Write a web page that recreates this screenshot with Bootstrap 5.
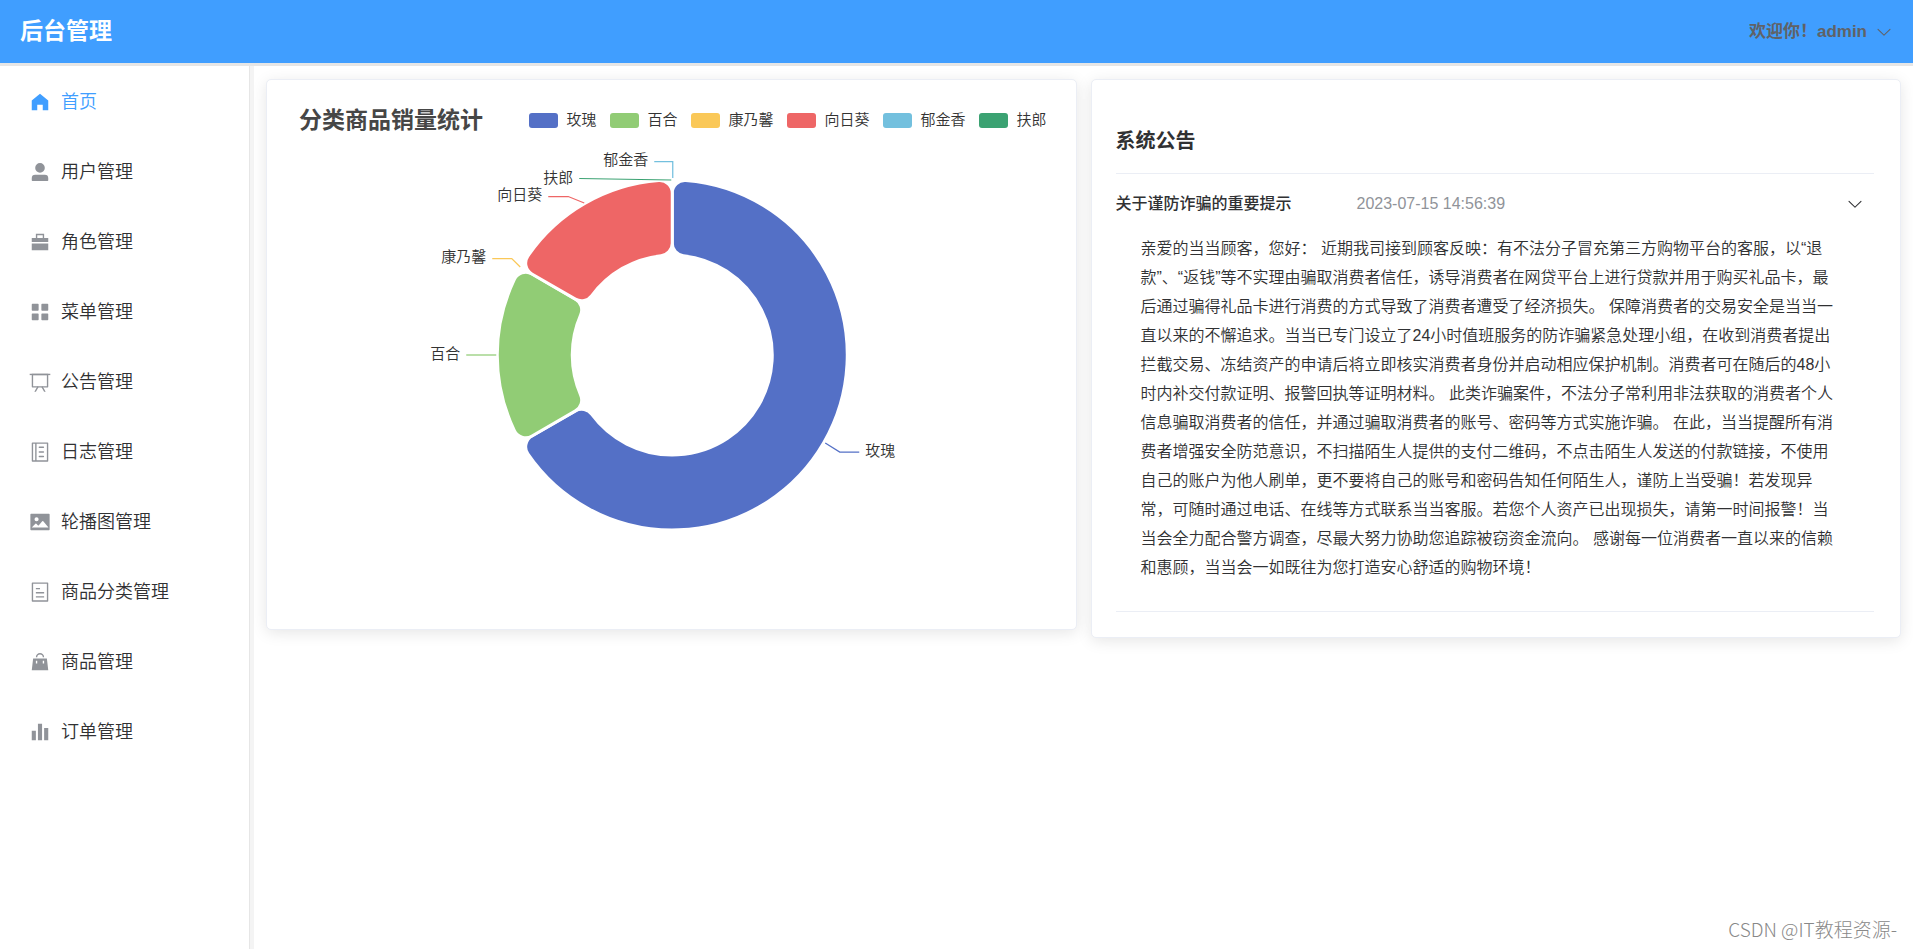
<!DOCTYPE html>
<html lang="zh-CN">
<head>
<meta charset="utf-8">
<meta name="viewport" content="width=device-width, initial-scale=1">
<title>后台管理</title>
<link href="https://cdn.jsdelivr.net/npm/bootstrap@5.3.0/dist/css/bootstrap.min.css" rel="stylesheet">
<style>
  body { font-family: "Liberation Sans", "Noto Sans CJK SC", sans-serif; font-weight: 350; color: #303133; background: #fff; }
  .topbar { height: 66px; background: #409eff; border-bottom: 3px solid #e6e6e6; padding: 0 20px; }
  .brand-title { font-size: 23px; font-weight: 700; color: #fff; text-decoration: none; }
  .user-toggle { font-size: 17px; font-weight: 700; color: #606266; border: 0; background: none; padding: 0; }
  .user-toggle svg, .notice-toggle svg { width: 18px; height: 18px; fill: currentColor; }
  .sidebar { width: 254px; border-right: 4px solid #f4f4f4; }
  .side-nav { border-right: 1px solid #e6e6e6; padding-top: 1px; }
  .side-link { height: 70px; padding: 0 29px; gap: 10px; font-size: 18px; color: #303133; text-decoration: none; white-space: nowrap; }
  .side-link svg { width: 22px; height: 22px; fill: #909399; flex: none; }
  .side-link.active { color: #409eff; }
  .side-link.active svg { fill: #409eff; }
  .panels { grid-template-columns: minmax(0, 1fr) minmax(0, 1fr); padding: 13px 12px; gap: 14px; }
  .panel { border: 1px solid #ebeef5; border-radius: 5px; box-shadow: 0 3px 15px rgba(0,0,0,.1); }
  .chart-head { padding: 23px 29px 0 32px; }
  .chart-title { font-size: 23px; line-height: 34px; font-weight: 700; color: #464646; margin: 0; }
  .legend-list { gap: 14px; font-size: 15px; color: #333; }
  .legend-list li { gap: 8px; }
  .swatch { width: 29px; height: 15px; border-radius: 3px; }
  .donut { display: block; width: 100%; height: 492px; font-size: 15px; }
  .notice { padding: 0 26px 25px 24px; }
  .notice-title { font-size: 20px; line-height: 30px; font-weight: 700; margin: 0; padding: 46px 0 17px; border-bottom: 1px solid #ebeef5; }
  .notice-toggle { height: 60px; border: 0; background: none; padding: 0 10px 0 0; font-size: 16px; color: #303133; }
  .notice-name { font-weight: 500; width: 241px; text-align: left; }
  .notice-date { color: #909399; font-weight: 400; }
  .notice-body { font-size: 16px; line-height: 29px; padding: 0 32px 29px 25px; border-bottom: 1px solid #ebeef5; }
  .watermark { right: 16px; bottom: 6px; font: 300 19px/28px "Noto Sans CJK SC", sans-serif; color: #888; }
</style>
</head>
<body class="d-flex flex-column min-vh-100">
<header class="topbar d-flex align-items-center justify-content-between">
  <a class="brand-title" href="#">后台管理</a>
  <div class="dropdown">
    <button class="user-toggle d-flex align-items-center gap-2" type="button" data-bs-toggle="dropdown" aria-expanded="false">
      <span>欢迎你！admin</span>
      <svg viewBox="0 0 1024 1024"><path d="M831.872 340.864 512 652.672 192.128 340.864a30.592 30.592 0 0 0-42.752 0 29.12 29.12 0 0 0 0 41.6L489.664 714.24a32 32 0 0 0 44.672 0l340.288-331.712a29.12 29.12 0 0 0 0-41.728 30.592 30.592 0 0 0-42.752 0z"/></svg>
    </button>
  </div>
</header>

<div class="d-flex flex-grow-1 position-relative">
  <aside class="sidebar flex-shrink-0 d-flex">
    <nav class="side-nav w-100 d-flex flex-column">
      <a class="side-link active d-flex align-items-center" href="#"><svg viewBox="0 0 1024 1024"><path d="M512 128 128 447.936V896h255.936V640H640v256h255.936V447.936z"/></svg>首页</a>
      <a class="side-link d-flex align-items-center" href="#"><svg viewBox="0 0 1024 1024"><path d="M288 320a224 224 0 1 0 448 0 224 224 0 1 0-448 0zm544 608H160a32 32 0 0 1-32-32v-96a160 160 0 0 1 160-160h448a160 160 0 0 1 160 160v96a32 32 0 0 1-32 32z"/></svg>用户管理</a>
      <a class="side-link d-flex align-items-center" href="#"><svg viewBox="0 0 1024 1024"><path d="M320 320V128h384v192h192v192H128V320h192zM128 576h768v320H128V576zm256-256h256.064V192H384v128z"/></svg>角色管理</a>
      <a class="side-link d-flex align-items-center" href="#"><svg viewBox="0 0 1024 1024"><path d="M160 448a32 32 0 0 1-32-32V160a32 32 0 0 1 32-32h256a32 32 0 0 1 32 32v256a32 32 0 0 1-32 32H160zm448 0a32 32 0 0 1-32-32V160a32 32 0 0 1 32-32h256a32 32 0 0 1 32 32v256a32 32 0 0 1-32 32H608zM160 896a32 32 0 0 1-32-32V608a32 32 0 0 1 32-32h256a32 32 0 0 1 32 32v256a32 32 0 0 1-32 32H160zm448 0a32 32 0 0 1-32-32V608a32 32 0 0 1 32-32h256a32 32 0 0 1 32 32v256a32 32 0 0 1-32 32H608z"/></svg>菜单管理</a>
      <a class="side-link d-flex align-items-center" href="#"><svg viewBox="0 0 1024 1024"><path d="M32 128h960v64H32z"/><path d="M192 192v512h640V192H192zm-64-64h768v608a32 32 0 0 1-32 32H160a32 32 0 0 1-32-32V128z"/><path d="M322.176 960H248.32l144.64-250.56 55.424 32L322.176 960zm453.888 0h-73.856L576 741.44l55.424-32L776.064 960z"/></svg>公告管理</a>
      <a class="side-link d-flex align-items-center" href="#"><svg viewBox="0 0 1024 1024"><path fill-rule="evenodd" d="M160 64h704a32 32 0 0 1 32 32v832a32 32 0 0 1-32 32H160a32 32 0 0 1-32-32V96a32 32 0 0 1 32-32zM192 128v768h96V128zM352 128v768h480V128z"/><path d="M480 256h192a32 32 0 0 1 0 64H480a32 32 0 0 1 0-64zM480 480h192a32 32 0 0 1 0 64H480a32 32 0 0 1 0-64zM480 688h192a32 32 0 0 1 0 64H480a32 32 0 0 1 0-64z"/></svg>日志管理</a>
      <a class="side-link d-flex align-items-center" href="#"><svg viewBox="0 0 1024 1024"><path d="M96 896a32 32 0 0 1-32-32V160a32 32 0 0 1 32-32h832a32 32 0 0 1 32 32v704a32 32 0 0 1-32 32H96zm315.52-228.48-68.928-68.928a32 32 0 0 0-45.248 0L128 768.064h778.688l-242.112-290.56a32 32 0 0 0-49.216 0L458.752 665.408a32 32 0 0 1-47.232 2.112zM256 384a96 96 0 1 0 192.064-.064A96 96 0 0 0 256 384z"/></svg>轮播图管理</a>
      <a class="side-link d-flex align-items-center" href="#"><svg viewBox="0 0 1024 1024"><path d="M192 128v768h640V128H192zm-32-64h704a32 32 0 0 1 32 32v832a32 32 0 0 1-32 32H160a32 32 0 0 1-32-32V96a32 32 0 0 1 32-32zm160 448h384v64H320v-64zm0-192h192v64H320v-64zm0 384h384v64H320v-64z"/></svg>商品分类管理</a>
      <a class="side-link d-flex align-items-center" href="#"><svg viewBox="0 0 1024 1024"><path d="M192 352h640l64 544H128l64-544zm128 224h64V448h-64v128zm320 0h64V448h-64v128zM384 288h-64a192 192 0 1 1 384 0h-64a128 128 0 1 0-256 0z"/></svg>商品管理</a>
      <a class="side-link d-flex align-items-center" href="#"><svg viewBox="0 0 1024 1024"><path d="M416 896V128h192v768H416zm-288 0V448h192v448H128zm576 0V320h192v576H704z"/></svg>订单管理</a>
    </nav>
  </aside>

  <main class="panels flex-grow-1 d-grid align-items-start">
    <section class="panel bg-white">
      <div class="chart-head d-flex align-items-center justify-content-between">
        <h2 class="chart-title">分类商品销量统计</h2>
        <ul class="legend-list list-unstyled d-flex mb-0">
          <li class="d-flex align-items-center"><span class="swatch" style="background:#5470c6"></span>玫瑰</li>
          <li class="d-flex align-items-center"><span class="swatch" style="background:#91cc75"></span>百合</li>
          <li class="d-flex align-items-center"><span class="swatch" style="background:#fac858"></span>康乃馨</li>
          <li class="d-flex align-items-center"><span class="swatch" style="background:#ee6666"></span>向日葵</li>
          <li class="d-flex align-items-center"><span class="swatch" style="background:#73c0de"></span>郁金香</li>
          <li class="d-flex align-items-center"><span class="swatch" style="background:#3ba272"></span>扶郎</li>
        </ul>
      </div>
      <svg class="donut" viewBox="0 0 808 492" role="img" aria-label="分类商品销量统计">
        <g transform="translate(405 218)" stroke="#fff" stroke-width="3">
          <path fill="#5470c6" d="M0-162A12.5 12.5 0 0 1 13.46-174.48A175 175 0 1 1-144.37 98.9A12.5 12.5 0 0 1-140.31 81L-96.82 55.9A12.5 12.5 0 0 1-80.51 59.31A100 100 0 1 0 11.11-99.38A12.5 12.5 0 0 1 0-111.8Z"/>
          <path fill="#91cc75" transform="rotate(240)" d="M0-162A12.5 12.5 0 0 1 13.46-174.48A175 175 0 0 1 144.37-98.9A12.5 12.5 0 0 1 140.31-81L96.82-55.9A12.5 12.5 0 0 1 80.51-59.31A100 100 0 0 0 11.11-99.38A12.5 12.5 0 0 1 0-111.8Z"/>
          <path fill="#ee6666" transform="rotate(300)" d="M0-162A12.5 12.5 0 0 1 13.46-174.48A175 175 0 0 1 144.37-98.9A12.5 12.5 0 0 1 140.31-81L96.82-55.9A12.5 12.5 0 0 1 80.51-59.31A100 100 0 0 0 11.11-99.38A12.5 12.5 0 0 1 0-111.8Z"/>
        </g>
        <g fill="none" stroke-width="1.25">
          <path stroke="#73c0de" d="M387 24.5H405.500V41"/>
          <path stroke="#3ba272" d="M312 41.500L404 43"/>
          <path stroke="#ee6666" d="M281 59.500H301L317 66"/>
          <path stroke="#fac858" d="M225 121.500H244.500L253 130"/>
          <path stroke="#91cc75" d="M199 218H229"/>
          <path stroke="#5470c6" d="M558 306L572.500 315H592"/>
        </g>
        <g fill="#333" text-anchor="end">
          <text x="381" y="28">郁金香</text>
          <text x="306" y="46">扶郎</text>
          <text x="275" y="63">向日葵</text>
          <text x="219" y="125">康乃馨</text>
          <text x="193" y="222">百合</text>
          <text x="628" y="319">玫瑰</text>
        </g>
      </svg>
    </section>

    <section class="panel bg-white notice">
      <h2 class="notice-title">系统公告</h2>
      <button class="notice-toggle w-100 d-flex align-items-center" type="button" data-bs-toggle="collapse" data-bs-target="#notice1" aria-expanded="true" aria-controls="notice1">
        <span class="notice-name">关于谨防诈骗的重要提示</span>
        <span class="notice-date">2023-07-15 14:56:39</span>
        <svg class="ms-auto" viewBox="0 0 1024 1024"><path d="M831.872 340.864 512 652.672 192.128 340.864a30.592 30.592 0 0 0-42.752 0 29.12 29.12 0 0 0 0 41.6L489.664 714.24a32 32 0 0 0 44.672 0l340.288-331.712a29.12 29.12 0 0 0 0-41.728 30.592 30.592 0 0 0-42.752 0z"/></svg>
      </button>
      <div class="collapse show" id="notice1">
        <div class="notice-body">亲爱的当当顾客，您好： 近期我司接到顾客反映：有不法分子冒充第三方购物平台的客服，以“退款”、“返钱”等不实理由骗取消费者信任，诱导消费者在网贷平台上进行贷款并用于购买礼品卡，最后通过骗得礼品卡进行消费的方式导致了消费者遭受了经济损失。 保障消费者的交易安全是当当一直以来的不懈追求。当当已专门设立了24小时值班服务的防诈骗紧急处理小组，在收到消费者提出拦截交易、冻结资产的申请后将立即核实消费者身份并启动相应保护机制。消费者可在随后的48小时内补交付款证明、报警回执等证明材料。 此类诈骗案件，不法分子常利用非法获取的消费者个人信息骗取消费者的信任，并通过骗取消费者的账号、密码等方式实施诈骗。 在此，当当提醒所有消费者增强安全防范意识，不扫描陌生人提供的支付二维码，不点击陌生人发送的付款链接，不使用自己的账户为他人刷单，更不要将自己的账号和密码告知任何陌生人，谨防上当受骗！若发现异常，可随时通过电话、在线等方式联系当当客服。若您个人资产已出现损失，请第一时间报警！当当会全力配合警方调查，尽最大努力协助您追踪被窃资金流向。 感谢每一位消费者一直以来的信赖和惠顾，当当会一如既往为您打造安心舒适的购物环境！</div>
      </div>
    </section>
  </main>
  <div class="watermark position-absolute">CSDN @IT教程资源-</div>
</div>
<script src="https://cdn.jsdelivr.net/npm/bootstrap@5.3.0/dist/js/bootstrap.bundle.min.js"></script>
</body>
</html>
